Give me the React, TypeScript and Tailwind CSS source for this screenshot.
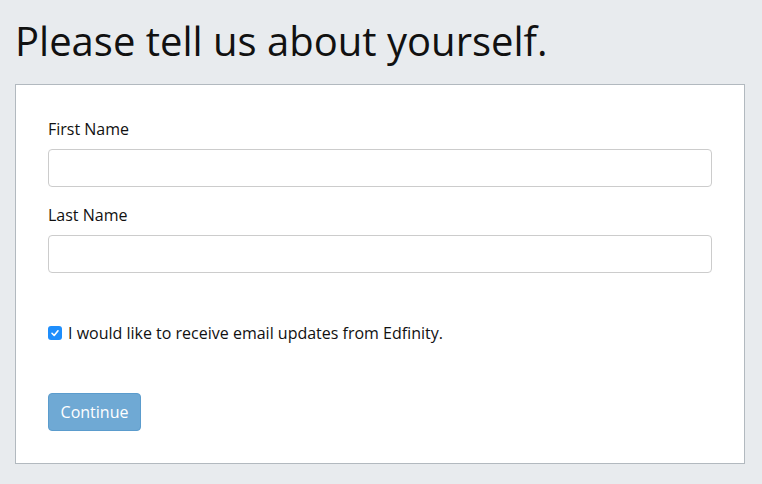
import React from "react";

export default function App() {
  return (
    <div
      className="min-h-[484px] w-full bg-[#e8ebee] px-[15px] pt-[13px] text-[#111]"
      style={{ fontFamily: '"Open Sans", sans-serif' }}
    >
      <h1 className="m-0 h-[71px] text-[40px] leading-[56px] font-normal">
        Please tell us about yourself.
      </h1>
      <div className="w-[730px] h-[380px] border border-[#b2b9bf] bg-white px-[32px] pt-[33px] pb-[32px]">
        <label className="block h-[22px] text-[16px] leading-[22px] mb-[9px]">First Name</label>
        <input className="block w-[664px] h-[38px] rounded-[4px] border border-[#cccccc] bg-white" />
        <label className="block h-[22px] text-[16px] leading-[22px] mt-[17px] mb-[9px]">Last Name</label>
        <input className="block w-[664px] h-[38px] rounded-[4px] border border-[#cccccc] bg-white" />
        <div className="mt-[49px] flex items-center h-[22px] text-[16px] leading-[22px]">
          <span className="flex items-center justify-center w-[14px] h-[14px] rounded-[3px] bg-[#1e8efc] mr-[6px]">
            <svg width="10" height="10" viewBox="0 0 10 10">
              <path d="M2 5.3 L4.2 7.5 L8 2.8" fill="none" stroke="white" strokeWidth="1.6" strokeLinecap="round" strokeLinejoin="round" />
            </svg>
          </span>
          <span>I would like to receive email updates from Edfinity.</span>
        </div>
        <button className="mt-[49px] block h-[38px] w-[93px] rounded-[4px] border border-[#5b9ccd] bg-[#6fa9d4] text-white text-[16px] leading-[22px]">
          Continue
        </button>
      </div>
    </div>
  );
}
